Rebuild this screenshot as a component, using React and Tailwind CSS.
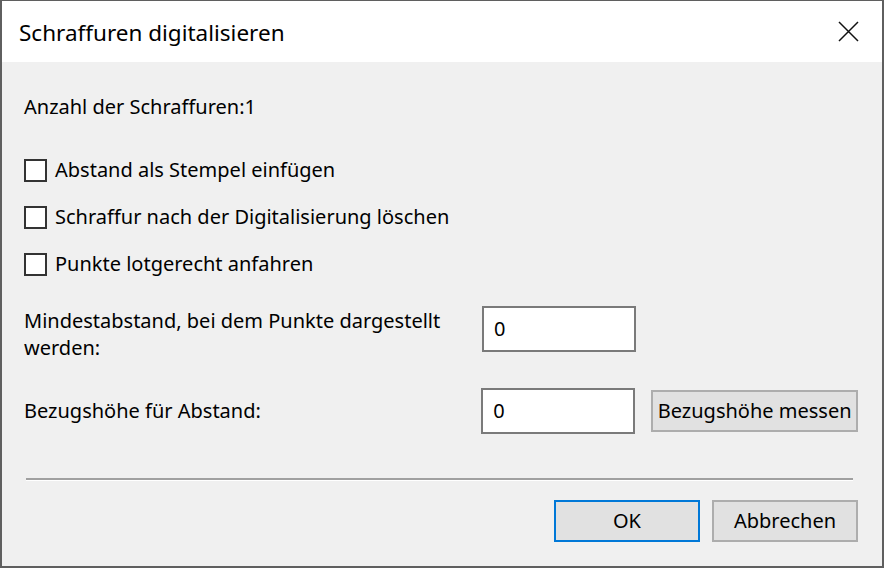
import React from 'react';

const font = { fontFamily: '"Noto Sans", "Open Sans", sans-serif' };

function Checkbox({ label }) {
  return (
    <label className="flex items-center h-[24px]">
      <span className="w-[23px] h-[23px] border-2 border-[#333333] bg-white shrink-0" />
      <span className="ml-[8px] text-[20px] leading-[24px] text-black">{label}</span>
    </label>
  );
}

function TextBox({ value }) {
  return (
    <div className="w-[154px] h-[46px] border-2 border-[#7a7a7a] bg-white flex items-center pl-[10px] text-[20px] text-black shrink-0">
      {value}
    </div>
  );
}

function Button({ children, primary, className = '' }) {
  return (
    <button
      className={
        'h-[42px] bg-[#e1e1e1] text-[20px] text-black flex items-center justify-center whitespace-nowrap ' +
        (primary ? 'border-2 border-[#0078d7] ' : 'border-2 border-[#adadad] ') +
        className
      }
    >
      {children}
    </button>
  );
}

export default function App() {
  return (
    <div
      className="w-[884px] h-[568px] flex flex-col border-x-2 border-b-2 border-t border-[#5f5f5f] bg-[#f0f0f0] overflow-hidden"
      style={font}
    >
      {/* Title bar */}
      <div className="h-[61px] bg-white flex items-center justify-between shrink-0">
        <div className="pl-[17px] text-[22.5px] text-black pt-[2px]">Schraffuren digitalisieren</div>
        <div className="mr-[23px] w-[22px] h-[22px] flex items-center justify-center">
          <svg width="21" height="21" viewBox="0 0 21 21">
            <path d="M1 1 L20 20 M20 1 L1 20" stroke="#111" strokeWidth="1.5" fill="none" />
          </svg>
        </div>
      </div>

      {/* Body */}
      <div className="flex-1 flex flex-col pl-[22px] pr-[24px]">
        <div className="mt-[33px] text-[20px] leading-[24px] text-black">Anzahl der Schraffuren:1</div>

        <div className="mt-[39px] flex flex-col gap-[23px]">
          <Checkbox label="Abstand als Stempel einfügen" />
          <Checkbox label="Schraffur nach der Digitalisierung löschen" />
          <Checkbox label="Punkte lotgerecht anfahren" />
        </div>

        <div className="mt-[30px] h-[46px] flex items-start">
          <div className="w-[458px] pt-[1px] text-[20px] leading-[27px] text-black">
            <div className="w-[440px]">Mindestabstand, bei dem Punkte dargestellt werden:</div>
          </div>
          <TextBox value="0" />
        </div>

        <div className="mt-[36px] flex items-center">
          <div className="w-[458px] text-[20px] leading-[24px] text-black">Bezugshöhe für Abstand:</div>
          <TextBox value="0" />
          <Button className="ml-[16px] w-[207px]">Bezugshöhe messen</Button>
        </div>

        <div className="mt-[44px] ml-[2px] mr-[5px] h-[3px] border-t-2 border-[#a0a0a0] border-b border-b-white" />

        <div className="mt-[19px] flex justify-end gap-[12px] mr-[0px]">
          <Button primary className="w-[146px]">OK</Button>
          <Button className="w-[146px]">Abbrechen</Button>
        </div>
      </div>
    </div>
  );
}
